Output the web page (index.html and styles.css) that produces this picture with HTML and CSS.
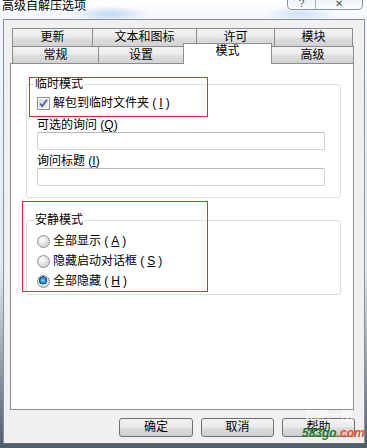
FILE: index.html
```html
<!DOCTYPE html>
<html>
<head>
  <title>高级自解压选项</title>
  <link rel="stylesheet" href="styles.css">
</head>
<body>
  <div class="titlebar">
    <span class="title">高级自解压选项</span>
    <div class="caption">
      <span class="cap-btn help">?</span>
      <span class="cap-btn close">✕</span>
    </div>
  </div>

  <div class="client">
    <div class="tabs">
      <div class="tab-row">
        <div class="tab" style="width:81px">更新</div>
        <div class="tab" style="width:105px">文本和图标</div>
        <div class="tab" style="width:79px">许可</div>
        <div class="tab" style="width:79px">模块</div>
      </div>
      <div class="tab-row front">
        <div class="tab" style="width:87px">常规</div>
        <div class="tab" style="width:86px">设置</div>
        <div class="tab active" style="width:89px">模式</div>
        <div class="tab" style="width:83px">高级</div>
      </div>
    </div>

    <div class="panel">
      <fieldset class="group temp">
        <legend>临时模式</legend>
        <label class="opt">
          <svg class="check" width="13" height="13" viewBox="0 0 13 13">
            <defs>
              <linearGradient id="cb" x1="0" y1="0" x2="1" y2="1">
                <stop offset="0" stop-color="#d2d4d8"/>
                <stop offset="1" stop-color="#f4f4f6"/>
              </linearGradient>
            </defs>
            <rect x="0.5" y="0.5" width="12" height="12" fill="#fff" stroke="#8e8f8f"/>
            <rect x="2" y="2" width="9" height="9" fill="url(#cb)"/>
            <path d="M3 6.5 L5.2 9 L10 2.8" fill="none" stroke="#4c61a0" stroke-width="1.8"/>
          </svg>
          解包到临时文件夹 (<u>I</u>)
        </label>
        <div class="field-label">可选的询问 (<u>Q</u>)</div>
        <div class="input"></div>
        <div class="field-label second">询问标题 (<u>I</u>)</div>
        <div class="input"></div>
      </fieldset>

      <fieldset class="group silent">
        <legend>安静模式</legend>
        <label class="opt"><span class="radio"></span>全部显示 (<u>A</u>)</label>
        <label class="opt"><span class="radio"></span>隐藏启动对话框 (<u>S</u>)</label>
        <label class="opt"><span class="radio on"></span>全部隐藏 (<u>H</u>)</label>
      </fieldset>
    </div>

    <div class="buttons">
      <div class="btn">确定</div>
      <div class="btn">取消</div>
      <div class="btn">帮助</div>
    </div>
  </div>

  <div class="mark red-a"></div>
  <div class="mark red-b"></div>

  <div class="watermark">
    <span class="wm-top">网吧一团</span>
    <span class="wm-site"><b class="g">583go</b><b class="o">.com</b></span>
  </div>
</body>
</html>
```

FILE: styles.css
```css
body {
  margin: 0;
  width: 367px;
  height: 448px;
  overflow: hidden;
  position: relative;
  font-family: "Liberation Sans", "Noto Sans CJK SC", sans-serif;
  font-size: 12px;
  color: #000;
  background:
    radial-gradient(ellipse 40px 8px at 110px 14px, rgba(150,190,235,0.55), transparent),
    radial-gradient(ellipse 35px 8px at 300px 14px, rgba(160,200,240,0.5), transparent),
    linear-gradient(#ffffff, #f3f7fb 18px, #dfe9f3 60%, #4e5d6c);
}

.titlebar {
  height: 19px;
  display: flex;
  justify-content: space-between;
  align-items: flex-start;
}
.title {
  margin-left: 2px;
  margin-top: -1px;
  font-size: 12px;
  line-height: 14px;
}
.caption {
  display: flex;
  margin-right: 4px;
  height: 9px;
  border: 1px solid #8893a0;
  border-top: none;
  border-radius: 0 0 5px 5px;
  background: linear-gradient(#eef2f6, #fbfcfd);
  overflow: hidden;
}
.cap-btn {
  display: flex;
  justify-content: center;
  align-items: flex-end;
  font-size: 10px;
  line-height: 10px;
  color: #4a5360;
}
.cap-btn.help {
  width: 27px;
  border-right: 1px solid #a9b3bf;
  margin-top: -3px;
}
.cap-btn.close {
  width: 46px;
  margin-top: -3px;
}

.client {
  margin-left: 3px;
  width: 360px;
  height: 423px;
  border: 1px solid #8c9095;
  border-bottom-color: #5f646a;
  background: #f0f0f0;
}

.tabs {
  padding: 8px 0 0 8px;
}
.tab-row {
  display: flex;
  height: 18px;
}
.tab-row.front {
  height: 17px;
  align-items: flex-end;
}
.tab {
  box-sizing: border-box;
  height: 18px;
  margin-left: -1px;
  border: 1px solid #898c95;
  border-bottom: none;
  background: linear-gradient(#f3f3f3, #ebebeb 45%, #dedede 55%, #d2d2d2);
  text-align: center;
  line-height: 17px;
}
.tab:first-child {
  margin-left: 0;
}
.front .tab {
  height: 17px;
  line-height: 16px;
}
.front .tab.active {
  position: relative;
  z-index: 1;
  height: 21px;
  margin-bottom: -1px;
  background: #fff;
  line-height: 14px;
}

.panel {
  box-sizing: border-box;
  margin-left: 6px;
  width: 344px;
  height: 347px;
  border: 1px solid #898c95;
  background: #fff;
  padding-top: 13px;
}

.group {
  box-sizing: border-box;
  margin: 0 0 0 15px;
  width: 315px;
  border: 1px solid #d5dfe5;
  border-radius: 3px;
  padding: 5px 0 0 10px;
}
.group legend {
  margin-left: -3px;
  padding: 0 1px;
  line-height: 14px;
}
.group.temp {
  padding-bottom: 11px;
}
.group.silent {
  margin-top: 15px;
  padding-top: 7px;
  padding-bottom: 6px;
}

.opt {
  display: flex;
  align-items: center;
  gap: 3px;
  height: 14px;
  line-height: 14px;
}
.silent .opt + .opt {
  margin-top: 6px;
}
u {
  text-decoration: underline;
  text-underline-offset: 1px;
}

.field-label {
  margin-top: 8px;
  line-height: 14px;
}
.field-label.second {
  margin-top: 4px;
}
.input {
  box-sizing: border-box;
  width: 288px;
  height: 18px;
  border: 1px solid #cfd3d8;
  border-top-color: #b4b8be;
  border-radius: 2px;
  background: #fff;
}

.radio {
  box-sizing: border-box;
  width: 13px;
  height: 13px;
  border-radius: 50%;
  border: 1px solid #8e8f8f;
  background: radial-gradient(circle at 40% 35%, #fdfdfd, #d6d6d6 70%, #c6c6c6);
}
.radio.on {
  background:
    radial-gradient(circle at 45% 40%, #9be0ff 0, #1c8ad6 2.5px, #0b4f8a 4px, transparent 4.2px),
    radial-gradient(circle at 40% 35%, #fdfdfd, #d6d6d6 70%, #c6c6c6);
}

.buttons {
  display: flex;
  justify-content: flex-end;
  gap: 8px;
  margin-top: 8px;
  padding-right: 9px;
}
.btn {
  box-sizing: border-box;
  width: 73px;
  height: 19px;
  border: 1px solid #707070;
  border-radius: 3px;
  background: linear-gradient(#f2f2f2, #ebebeb 48%, #dddddd 52%, #cfcfcf);
  text-align: center;
  line-height: 17px;
}
.btn:first-child {
  width: 74px;
}

.mark {
  position: absolute;
  border: 1px solid #e8272e;
}
.red-a {
  left: 29px;
  top: 77px;
  width: 177px;
  height: 38px;
}
.red-b {
  left: 22px;
  top: 201px;
  width: 184px;
  height: 89px;
}

.watermark {
  position: absolute;
  left: 302px;
  top: 408px;
  display: flex;
  flex-direction: column;
}
.wm-top {
  font-family: "Noto Sans CJK SC", sans-serif;
  font-size: 12px;
  line-height: 14px;
  color: rgba(255,255,255,0.85);
  margin-left: 3px;
}
.wm-site {
  font-family: "Liberation Sans", sans-serif;
  font-style: italic;
  font-size: 12px;
  line-height: 14px;
  margin-top: 4px;
}
.wm-site .g {
  color: #1f7a2a;
}
.wm-site .o {
  color: #e4532b;
}
```
